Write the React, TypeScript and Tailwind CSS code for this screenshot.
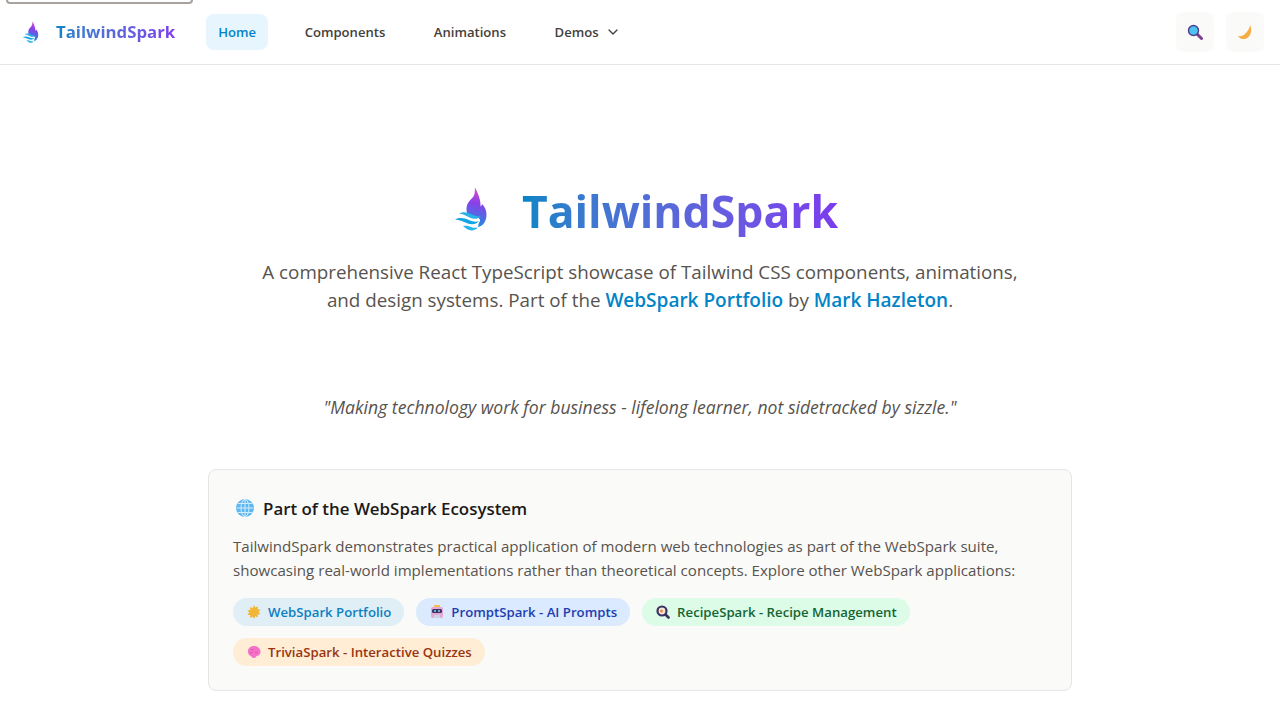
import React from "react";
import { ChevronDown } from "lucide-react";

const Flame = ({ className, id }: { className: string; id: string }) => (
  <svg viewBox="0 0 36 44" className={className}>
    <defs>
      <linearGradient id={id} x1="0.6" y1="0" x2="0.5" y2="1">
        <stop offset="0" stopColor="#e04fc8" />
        <stop offset="0.4" stopColor="#8b3fe8" />
        <stop offset="1" stopColor="#1d8fe0" />
      </linearGradient>
    </defs>
    <path
      d="M21 0.5c-.3 4 .2 6.500-2 9.500-2.500 3-6.500 6-6.500 12 0 2 .3 3.500 1 5 3 1 6 2.500 9 3 3 .5 4.500 3.500 3 5-1 1-1 3-1.500 5 5-.5 8.500-6 8.500-12.500 0-4.500-2-8-4.500-10.500-.3 1.500-.8 2-1.500 2.500.5-6-2-12-5.500-19z"
      fill={`url(#${id})`}
    />
    <path d="M5 26.500c5-2.500 9-1 13 1 3 1.500 6 2.500 8.500 1.500-2.500 3.500-7 3.500-11 1.500-3.500-1.800-6.500-3.500-10.500-4z" fill="#2bb0e8" />
    <path d="M1 32.500c5-2.500 9.500-1.500 14 .5 3.500 1.500 7 2.500 10 1-3 4-8 4-12.500 2-4-1.800-7-3-11.500-3.500z" fill="#12a5e6" />
    <path d="M9 39c3-.7 5.500 0 8 1 2.500 1 5 1.200 7 .3-2.500 3.200-6 3.700-9.500 2.500-2.300-.8-3.800-2.500-5.500-3.800z" fill="#26b4ee" />
  </svg>
);

const Search = () => (
  <svg viewBox="0 0 16 16" className="w-4 h-4">
    <path d="M10 10l4.500 4.500" stroke="#7b3f8f" strokeWidth="3" strokeLinecap="round" />
    <circle cx="6.500" cy="6.500" r="5" fill="#4fc3f0" stroke="#4a3f8f" strokeWidth="1.400" />
  </svg>
);

const Moon = () => (
  <svg viewBox="0 0 16 16" className="w-4 h-4">
    <path d="M13 1c2.500 5 1 12-4.500 13.800-3 .9-6-.2-7.500-2.800 3.500.5 6-.5 8-3 2-2.300 3.500-4.500 4-8z" fill="#f6ad45" />
  </svg>
);

const Globe = () => (
  <svg viewBox="0 0 18 18" className="w-[18px] h-[18px]" fill="none">
    <circle cx="9" cy="9" r="9" fill="#5cb8f2" />
    <g stroke="#d5ecfc" strokeWidth="1">
      <ellipse cx="9" cy="9" rx="4" ry="8.500" />
      <path d="M9 .5v17M.5 9h17M2 4.500h14M2 13.500h14" />
    </g>
  </svg>
);

const Sun = () => (
  <svg viewBox="0 0 14 14" className="w-3.5 h-3.5">
    <path d="M7 0l1.300 2.600L11 1.400l-.4 2.900 3 .3-2 2.200 2 2.500-3 .1.400 3-2.800-1.200L7 14l-1.400-2.300-2.700 1.200.4-3-3 .1 2-2.500-2-2.200 3-.3-.4-2.900 2.700 1.200z" fill="#f2b636" />
  </svg>
);

const Robot = () => (
  <svg viewBox="0 0 14 14" className="w-3.5 h-3.5">
    <rect x="4" y="0" width="6" height="2" fill="#f5c04a" />
    <rect x="1" y="2" width="12" height="11" rx="2" fill="#e3a8d8" />
    <rect x="2" y="4" width="10" height="4" rx="1.500" fill="#3b3560" />
    <circle cx="5" cy="6" r="1" fill="#7dd3fc" />
    <circle cx="9" cy="6" r="1" fill="#7dd3fc" />
    <rect x="4" y="10" width="6" height="3" fill="#cbd5e1" />
  </svg>
);

const Magnifier = () => (
  <svg viewBox="0 0 14 14" className="w-3.5 h-3.5">
    <path d="M9 9l3.500 3.500" stroke="#3b2f63" strokeWidth="2.600" strokeLinecap="round" />
    <circle cx="6" cy="6" r="4.500" fill="#f6e7d8" stroke="#3b2f63" strokeWidth="2.200" />
    <circle cx="5.500" cy="6" r="1.500" fill="#ef8a3c" />
  </svg>
);

const Brain = () => (
  <svg viewBox="0 0 14 14" className="w-3.5 h-3.5">
    <path d="M1 6c0-3 3-5 6-5s6 2 6.500 5c.4 3-2 5-4 5-.5 1.500-1.500 2-2.500 2-1.500 0-2.500-1-3-2C2 11 .8 8.500 1 6z" fill="#f472c8" />
    <path d="M4 4c1 1 2 1 3 0M8 7c1 1 2 1 3 0M3 8c1 0 2 0 2.500-1" stroke="#d946a8" strokeWidth=".8" fill="none" />
  </svg>
);

const pills = [
  { icon: <Sun />, label: "WebSpark Portfolio", cls: "bg-[#e0eff6] text-[#0e7fc2]" },
  { icon: <Robot />, label: "PromptSpark - AI Prompts", cls: "bg-[#dbeafe] text-[#1e40af]" },
  { icon: <Magnifier />, label: "RecipeSpark - Recipe Management", cls: "bg-[#dcfce7] text-[#166534]" },
  { icon: <Brain />, label: "TriviaSpark - Interactive Quizzes", cls: "bg-[#ffedd5] text-[#9a3412]" },
];

export default function App() {
  return (
    <div className="relative min-h-screen bg-white font-['Open_Sans',sans-serif] text-[#44403c] overflow-hidden">
      <div className="absolute left-[6px] top-[-20px] w-[187px] h-[24px] border-2 border-[#a8a29e] rounded-[4px]" />
      <nav className="h-[65px] border-b border-[#e7e5e4] flex items-center justify-between pl-[21px] pr-4">
        <div className="flex items-center">
          <a className="flex items-center gap-[15px] mr-[31px]">
            <Flame id="navFlame" className="w-5 h-[22px]" />
            <span className="text-[16.800px] font-bold bg-gradient-to-r from-[#0284c7] to-[#7c3aed] bg-clip-text text-transparent">TailwindSpark</span>
          </a>
          <div className="flex items-center gap-[24.500px] text-[13.100px] font-semibold">
            <a className="h-9 px-3 pt-[2px] rounded-lg flex items-center bg-[#e0f2fe]/80 text-[#0284c7]">Home</a>
            <a className="h-9 px-3 pt-[2px] flex items-center">Components</a>
            <a className="h-9 px-3 pt-[2px] flex items-center">Animations</a>
            <a className="h-9 px-3 flex items-center gap-1.5"><span className="pt-[2px]">Demos</span> <ChevronDown className="w-4 h-4" /></a>
          </div>
        </div>
        <div className="flex items-center gap-3">
          <button className="w-[38px] h-10 rounded-lg bg-[#fafaf9] flex items-center justify-center"><Search /></button>
          <button className="w-[38px] h-10 rounded-lg bg-[#fafaf9] flex items-center justify-center"><Moon /></button>
        </div>
      </nav>
      <main className="max-w-4xl mx-auto px-4">
        <section className="pt-[115px] text-center">
          <h1 className="flex items-center justify-center gap-8 h-[66px] pl-3">
            <Flame id="heroFlame" className="w-9 h-11 mb-2" />
            <span className="text-[44.500px] leading-none font-bold bg-gradient-to-r from-[#0284c7] to-[#7c3aed] bg-clip-text text-transparent pb-1">TailwindSpark</span>
          </h1>
          <p className="mt-[12px] text-[18.800px] leading-[28px] text-[#57534e]">
            A comprehensive React TypeScript showcase of Tailwind CSS components, animations,<br />
            and design systems. Part of the <a className="text-[19px] font-semibold text-[#0284c7]">WebSpark Portfolio</a> by <a className="text-[19px] font-semibold text-[#0284c7]">Mark Hazleton</a>.
          </p>
          <p className="mt-[79px] text-[17.600px] leading-7 italic text-[#57534e]">"Making technology work for business - lifelong learner, not sidetracked by sizzle."</p>
        </section>
        <section className="mt-12 p-6 h-[222px] rounded-lg border border-[#e7e5e4] bg-[#fafaf9]">
          <h3 className="flex items-center gap-[9px] pl-[3px] h-7 text-[16.900px] leading-7 font-semibold text-[#1c1917]"><Globe /> <span className="pt-[2px]">Part of the WebSpark Ecosystem</span></h3>
          <p className="mt-3 text-[15.100px] leading-6 text-[#57534e]">
            TailwindSpark demonstrates practical application of modern web technologies as part of the WebSpark suite, showcasing real-world implementations rather than theoretical concepts. Explore other WebSpark applications:
          </p>
          <div className="mt-4 flex flex-wrap gap-3">
            {pills.map((p) => (
              <a key={p.label} className={`h-7 pl-3.5 pr-[13px] rounded-full flex items-center gap-[7px] text-[13.200px] font-semibold ${p.cls}`}>{p.icon}<span className="pt-[2px]">{p.label}</span></a>
            ))}
          </div>
        </section>
      </main>
    </div>
  );
}
